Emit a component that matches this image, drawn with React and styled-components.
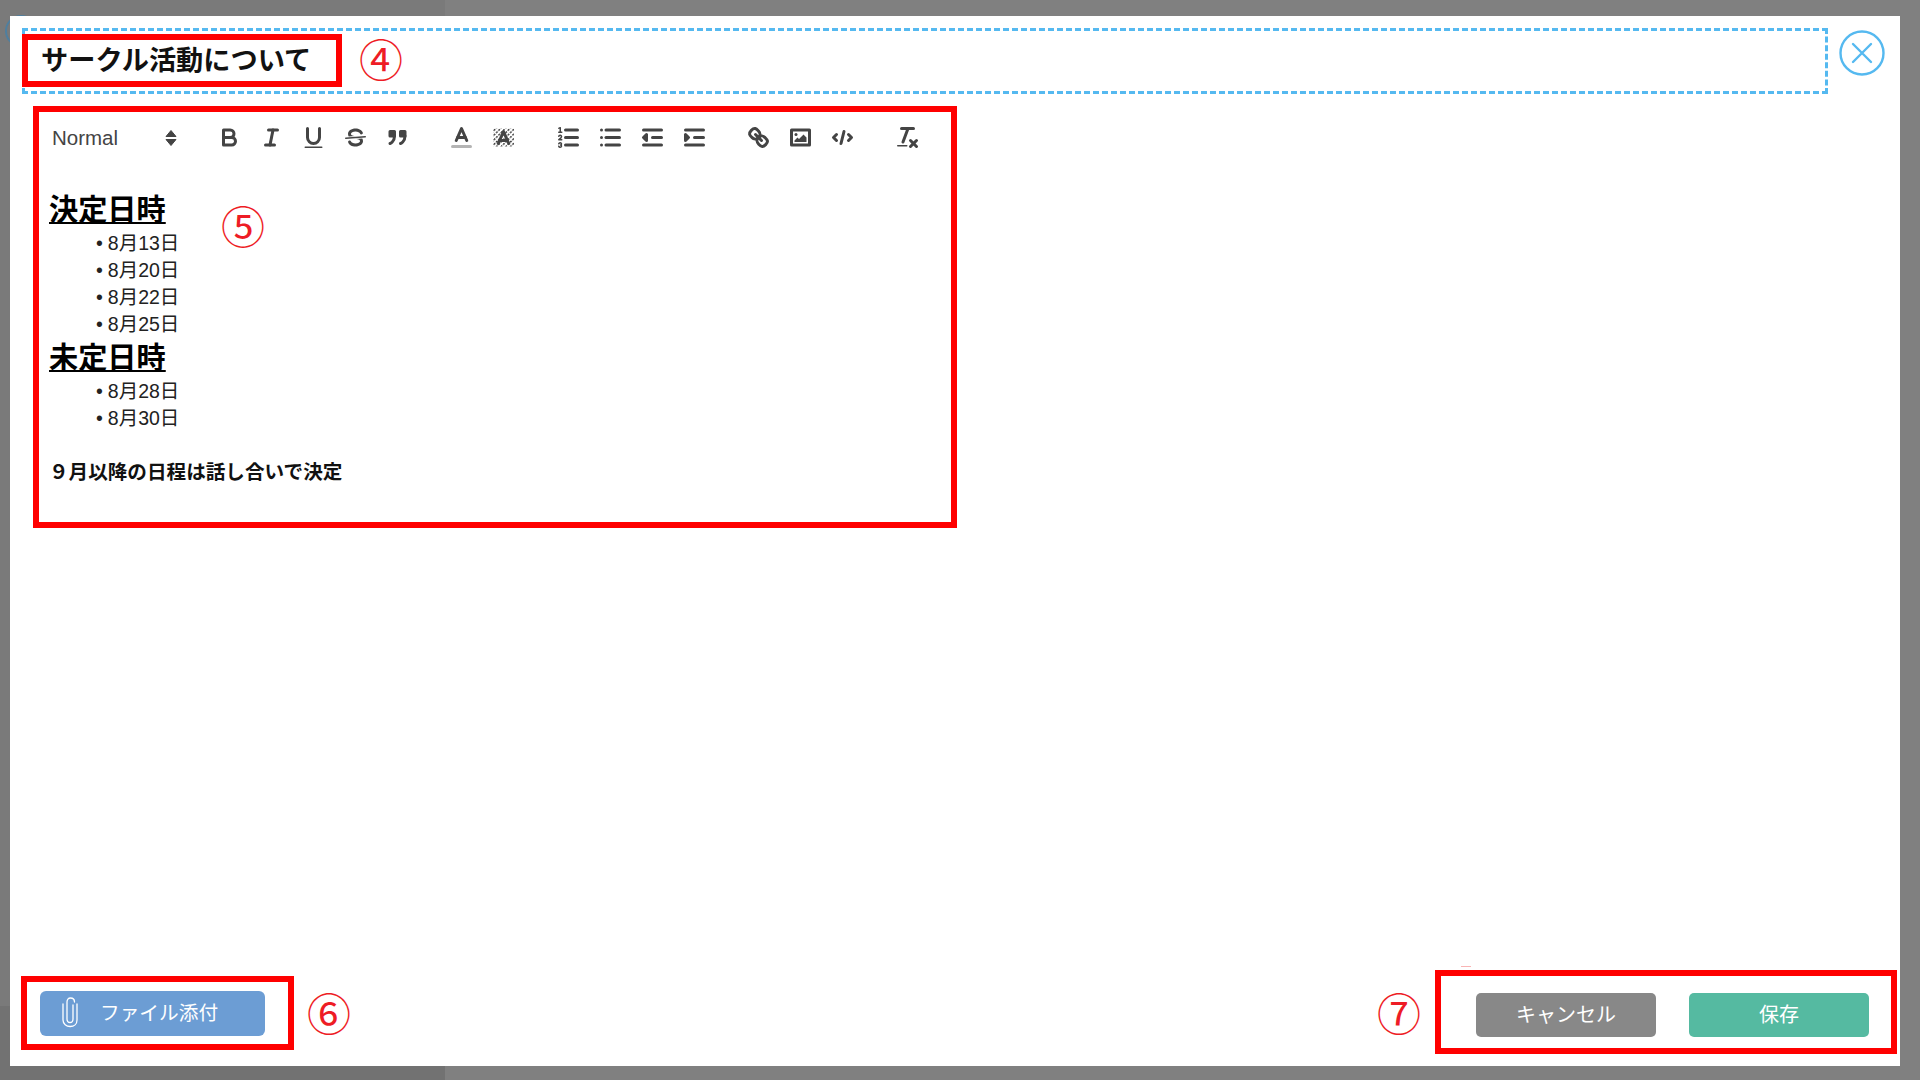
import React from 'react';
import styled, { createGlobalStyle } from 'styled-components';

const GlobalStyle = createGlobalStyle`
    html, body {
        margin: 0;
        padding: 0;
        background: #808080;
    }
    body {
        font-family: "Liberation Sans", "Noto Sans CJK JP", sans-serif;
    }
`

const Page = styled.div`
    position: relative;
    box-sizing: border-box;
    width: 1920px;
    height: 1080px;
    padding: 16px 20px 14px 10px;
    overflow: hidden;
    background:
        linear-gradient(#727272, #727272) left bottom / 445px 74px no-repeat,
        linear-gradient(#7a7a7a, #7a7a7a) left top / 445px 100% no-repeat,
        #808080;
`

const BackdropRing = styled.div`
    position: absolute;
    left: 5px;
    top: 15px;
    width: 32px;
    height: 32px;
    box-sizing: border-box;
    border: 2px solid #4f7f9f;
    border-radius: 50%;
`

const Dialog = styled.div`
    position: relative;
    box-sizing: border-box;
    height: 100%;
    background: #fff;
    display: flex;
    flex-direction: column;
    padding: 12px 3px 12px 12px;
`

const HeaderRow = styled.div`
    display: flex;
    align-items: flex-start;
`

const TitleField = styled.div`
    box-sizing: border-box;
    width: 1806px;
    height: 66px;
    border: 3px dashed #55b9f0;
    display: flex;
    align-items: flex-start;
    gap: 17px;
`

const TitleBox = styled.div`
    box-sizing: border-box;
    width: 320px;
    height: 53px;
    margin: 3px 0 0 -3px;
    border: 6px solid #f00;
    padding: 0 0 5px 13px;
    display: flex;
    align-items: center;
    font-size: 27.2px;
    font-weight: 700;
    color: #111;
    white-space: nowrap;
`

const Marker = styled.span`
    font-family: "Noto Sans CJK JP", sans-serif;
    font-size: 44px;
    line-height: 44px;
    color: #ee1c25;
`

const TitleMarker = styled(Marker)`
    margin-top: 5px;
`

const FloatingMarker = styled(Marker)`
    position: absolute;
    left: 211px;
    top: 187px;
`

const CloseButton = styled.button`
    width: 46px;
    height: 46px;
    margin: 2px 0 0 11px;
    padding: 0;
    border: 0;
    background: none;
    display: block;
`

const EditorBox = styled.div`
    box-sizing: border-box;
    width: 924px;
    height: 422px;
    margin: 12px 0 0 11px;
    border: 6px solid #f00;
`

const Toolbar = styled.div`
    display: flex;
    align-items: center;
    gap: 22.5px;
    padding: 7px 0 0 13px;
`

const Picker = styled.div`
    width: 133.5px;
    display: flex;
    align-items: center;
    justify-content: space-between;
    font-size: 20.5px;
    color: #444;
    padding: 2px 7.5px 0 0;
    box-sizing: border-box;
`

const ToolGroup = styled.div`
    display: flex;
`

const ToolButton = styled.button`
    width: 42px;
    height: 36px;
    padding: 0;
    border: 0;
    background: none;
    display: flex;
    align-items: center;
    justify-content: center;
`

const Content = styled.div`
    padding: 35px 0 0 10px;
    color: #111;
`

const Heading = styled.div`
    font-size: 29.2px;
    line-height: 40px;
    font-weight: 700;
    text-decoration: underline;
    color: #000;
`

const DateList = styled.ul`
    list-style: none;
    margin: 0;
    padding: 0 0 0 47px;
`

const DateItem = styled.li`
    font-size: 19.5px;
    line-height: 27px;
    color: #222;

    &::before {
        content: '•';
        margin-right: 5px;
    }
`

const Note = styled.p`
    margin: 27px 0 0 0;
    font-size: 19.6px;
    line-height: 27px;
    font-weight: 700;
    color: #111;
`

const Footer = styled.div`
    margin-top: auto;
    display: flex;
    align-items: center;
`

const AttachBox = styled.div`
    box-sizing: border-box;
    width: 273px;
    height: 74px;
    border: 6px solid #f00;
    padding: 9px 0 0 13px;
    margin: 2px 13px 0 -1px;
`

const AttachButton = styled.button`
    box-sizing: border-box;
    width: 225px;
    height: 45px;
    padding: 0 0 4px 21px;
    border: 0;
    border-radius: 6px;
    background: #6c9dd4;
    color: #fff;
    font-family: inherit;
    font-size: 19.7px;
    display: flex;
    align-items: center;
    gap: 21px;
`

const ActionsGroup = styled.div`
    margin-left: auto;
    display: flex;
    align-items: center;
    gap: 14px;
`

const ActionsBox = styled.div`
    position: relative;
    box-sizing: border-box;
    width: 462px;
    height: 84px;
    border: 6px solid #f00;
    padding: 17px 22px 0 35px;
    display: flex;
    justify-content: space-between;

    &::before {
        content: '';
        position: absolute;
        left: 20px;
        top: -10px;
        width: 10px;
        height: 1px;
        background: #f9b4b4;
    }
`

const ActionButton = styled.button`
    width: 180px;
    height: 44px;
    padding: 0 0 4px;
    border: 0;
    border-radius: 5px;
    background: ${props => props.$primary ? '#55baa1' : '#888'};
    color: #fff;
    font-family: inherit;
    font-size: 20px;
`
//END OF STYLES

const Icon = ({ children }) => (
    <svg width='27' height='27' viewBox='0 0 18 18' fill='none' stroke='#444' strokeWidth='2' strokeLinecap='round' strokeLinejoin='round'>
        {children}
    </svg>
)

const fill = { fill: '#444', stroke: 'none' }
const thin = { strokeWidth: 1 }

const icons = {
    bold: <>
        <path d='M5,4H9.5A2.5,2.5,0,0,1,12,6.5v0A2.5,2.5,0,0,1,9.5,9H5V4Z' />
        <path d='M5,9h5.5A2.5,2.5,0,0,1,13,11.5v0A2.5,2.5,0,0,1,10.5,14H5V9Z' />
    </>,
    italic: <>
        <line x1='7' x2='13' y1='4' y2='4' />
        <line x1='5' x2='11' y1='14' y2='14' />
        <line x1='8' x2='10' y1='14' y2='4' />
    </>,
    underline: <>
        <path d='M5,3V9a4.012,4.012,0,0,0,4,4H9a4.012,4.012,0,0,0,4-4V3' />
        <rect {...fill} height='1' rx='.5' ry='.5' width='12' x='3' y='15' />
    </>,
    strike: <>
        <line {...thin} x1='15.5' x2='2.5' y1='8.5' y2='9.5' />
        <path {...fill} d='M9.007,8C6.542,7.791,6,7.519,6,6.5,6,5.792,7.283,5,9,5c1.571,0,2.765.679,2.969,1.309a1,1,0,0,0,1.9-.617C13.356,4.106,11.354,3,9,3,6.2,3,4,4.538,4,6.5a3.2,3.2,0,0,0,.5,1.843Z' />
        <path {...fill} d='M8.984,10C11.457,10.208,12,10.479,12,11.5c0,.708-1.283,1.5-3,1.5-1.571,0-2.765-.679-2.969-1.309a1,1,0,1,0-1.9.617C4.644,13.894,6.646,15,9,15c2.8,0,5-1.538,5-3.5a3.2,3.2,0,0,0-.5-1.843Z' />
    </>,
    quote: <>
        <rect fill='#444' height='3' width='3' x='4' y='5' />
        <rect fill='#444' height='3' width='3' x='11' y='5' />
        <path d='M7,8c0,4.031-3,5-3,5' />
        <path d='M14,8c0,4.031-3,5-3,5' />
    </>,
    color: <>
        <line opacity='.4' x1='3' x2='15' y1='15' y2='15' />
        <polyline points='5.5 11 9 3 12.5 11' />
        <line x1='11.63' x2='6.38' y1='9' y2='9' />
    </>,
    background: <>
        <defs>
            <pattern id='hatch' width='2.2' height='2.2' patternUnits='userSpaceOnUse' patternTransform='rotate(45)'>
                <rect width='1' height='1.4' fill='#444' stroke='none' />
            </pattern>
        </defs>
        <rect x='2' y='3' width='14' height='12' fill='url(#hatch)' stroke='none' />
        <polyline points='5.5 13 9 5 12.5 13' />
        <line x1='11.63' x2='6.38' y1='11' y2='11' />
    </>,
    ordered: <>
        <line x1='7' x2='15' y1='4' y2='4' />
        <line x1='7' x2='15' y1='9' y2='9' />
        <line x1='7' x2='15' y1='14' y2='14' />
        <line {...thin} x1='2.5' x2='4.5' y1='5.5' y2='5.5' />
        <path {...fill} d='M3.5,6A0.5,0.5,0,0,1,3,5.5V3.085l-0.276.138A0.5,0.5,0,0,1,2.053,3c-0.124-.247-0.023-0.324.224-0.447l1-.5A0.5,0.5,0,0,1,4,2.5v3A0.5,0.5,0,0,1,3.5,6Z' />
        <path {...thin} d='M4.5,10.5h-2c0-.234,1.85-1.076,1.85-2.234A0.959,0.959,0,0,0,2.5,8.156' />
        <path {...thin} d='M2.5,14.846a0.959,0.959,0,0,0,1.85-.109A0.7,0.7,0,0,0,3.75,14a0.688,0.688,0,0,0,.6-0.736,0.959,0.959,0,0,0-1.85-.109' />
    </>,
    bullet: <>
        <line x1='6' x2='15' y1='4' y2='4' />
        <line x1='6' x2='15' y1='9' y2='9' />
        <line x1='6' x2='15' y1='14' y2='14' />
        <line x1='3' x2='3' y1='4' y2='4' />
        <line x1='3' x2='3' y1='9' y2='9' />
        <line x1='3' x2='3' y1='14' y2='14' />
    </>,
    outdent: <>
        <line x1='3' x2='15' y1='14' y2='14' />
        <line x1='3' x2='15' y1='4' y2='4' />
        <line x1='9' x2='15' y1='9' y2='9' />
        <polyline fill='#444' points='5 7 5 11 3 9 5 7' />
    </>,
    indent: <>
        <line x1='3' x2='15' y1='14' y2='14' />
        <line x1='3' x2='15' y1='4' y2='4' />
        <line x1='9' x2='15' y1='9' y2='9' />
        <polyline fill='#444' points='3 7 3 11 5 9 3 7' />
    </>,
    link: <>
        <line x1='7' x2='11' y1='7' y2='11' />
        <path d='M8.9,4.577a3.476,3.476,0,0,1,.36,4.679A3.476,3.476,0,0,1,4.577,8.9C3.185,7.5,2.035,6.4,4.217,4.217S7.5,3.185,8.9,4.577Z' />
        <path d='M13.423,9.1a3.476,3.476,0,0,0-4.679-.36,3.476,3.476,0,0,0,.36,4.679c1.392,1.392,2.5,2.542,4.679.36S14.815,10.5,13.423,9.1Z' />
    </>,
    image: <>
        <rect height='10' width='12' x='3' y='4' />
        <circle {...fill} cx='6' cy='7' r='1' />
        <polyline {...fill} points='5 12 5 11 7 9 8 10 11 7 13 9 13 12 5 12' />
    </>,
    code: <>
        <polyline points='5 7 3 9 5 11' />
        <polyline points='13 7 15 9 13 11' />
        <line x1='10' x2='8' y1='5' y2='13' />
    </>,
    clean: <>
        <line x1='5' x2='13' y1='3' y2='3' />
        <line x1='6' x2='9.35' y1='12' y2='3' />
        <line x1='11' x2='15' y1='11' y2='15' />
        <line x1='15' x2='11' y1='11' y2='15' />
        <rect {...fill} height='1' rx='.5' ry='.5' width='7' x='2' y='14' />
    </>,
}

const toolGroups = [
    ['bold', 'italic', 'underline', 'strike', 'quote'],
    ['color', 'background'],
    ['ordered', 'bullet', 'outdent', 'indent'],
    ['link', 'image', 'code'],
    ['clean'],
]

const App = () => {
    return (
        <Page>
            <GlobalStyle />
            <BackdropRing />
            <Dialog>
                <HeaderRow>
                    <TitleField>
                        <TitleBox>サークル活動について</TitleBox>
                        <TitleMarker>④</TitleMarker>
                    </TitleField>
                    <CloseButton aria-label='close'>
                        <svg width='46' height='46' viewBox='0 0 46 46' fill='none' stroke='#55b9f0' strokeLinecap='round'>
                            <circle cx='23' cy='23' r='21.5' strokeWidth='2.4' />
                            <path d='M14 14L32 32M32 14L14 32' strokeWidth='2.4' />
                        </svg>
                    </CloseButton>
                </HeaderRow>

                <EditorBox>
                    <Toolbar>
                        <Picker>
                            <span>Normal</span>
                            <svg width='14' height='20' viewBox='0 0 14 20' fill='#444'>
                                <path d='M7 2.5L12 8.5H2Z' stroke='#444' strokeLinejoin='round' />
                                <path d='M7 17.5L12 11.5H2Z' stroke='#444' strokeLinejoin='round' />
                            </svg>
                        </Picker>
                        {toolGroups.map((group, i) => (
                            <ToolGroup key={i}>
                                {group.map(name => (
                                    <ToolButton key={name} aria-label={name}>
                                        <Icon>{icons[name]}</Icon>
                                    </ToolButton>
                                ))}
                            </ToolGroup>
                        ))}
                    </Toolbar>
                    <Content>
                        <Heading>決定日時</Heading>
                        <DateList>
                            <DateItem>8月13日</DateItem>
                            <DateItem>8月20日</DateItem>
                            <DateItem>8月22日</DateItem>
                            <DateItem>8月25日</DateItem>
                        </DateList>
                        <Heading>未定日時</Heading>
                        <DateList>
                            <DateItem>8月28日</DateItem>
                            <DateItem>8月30日</DateItem>
                        </DateList>
                        <Note>９月以降の日程は話し合いで決定</Note>
                    </Content>
                </EditorBox>
                <FloatingMarker>⑤</FloatingMarker>

                <Footer>
                    <AttachBox>
                        <AttachButton>
                            <svg width='18' height='32' viewBox='0 0 18 32' fill='none' stroke='#fff' strokeWidth='1.3' strokeLinecap='round'>
                                <path d='M12 9V23C12 25.2 10.8 26.5 9 26.5C7.2 26.5 6 25.2 6 23V6C6 3.6 7.3 2 9.5 2C11.7 2 13.5 3.6 13.5 6' />
                                <path d='M16 8V24C16 28 13 30.5 9.2 30.5C5.4 30.5 2 28 2 24V8' />
                            </svg>
                            ファイル添付
                        </AttachButton>
                    </AttachBox>
                    <Marker>⑥</Marker>
                    <ActionsGroup>
                        <Marker>⑦</Marker>
                        <ActionsBox>
                            <ActionButton>キャンセル</ActionButton>
                            <ActionButton $primary>保存</ActionButton>
                        </ActionsBox>
                    </ActionsGroup>
                </Footer>
            </Dialog>
        </Page>
    )
}

export default App
